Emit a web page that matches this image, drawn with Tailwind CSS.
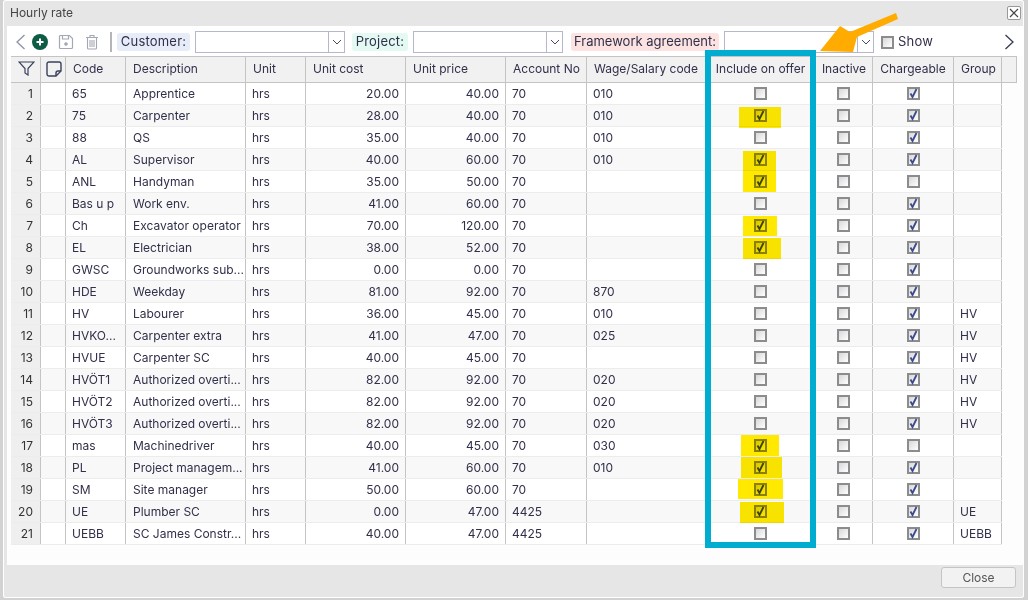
<!DOCTYPE html>
<html lang="en">
<head>
  <meta charset="UTF-8" />
  <title>Hourly rate</title>
  <script src="https://cdn.jsdelivr.net/npm/@tailwindcss/browser@4"></script>
</head>
<body class="bg-[#d2d2d2] font-['Inter',sans-serif] text-[12px] text-[#30304a] overflow-hidden">
  <div class="relative w-[1028px] h-[600px] overflow-hidden">

    <!-- Dialog -->
    <div class="ml-[3px] w-[1021px] h-[598px] bg-[#e6e6e6] rounded-[3px] shadow-[inset_0_0_0_1px_#fff] flex flex-col">
      <div class="h-[26px] flex items-center justify-between pl-[7px] pr-[3px]">
        <span class="text-[12px] text-[#444]">Hourly rate</span>
        <button class="w-[14px] h-[14px] border border-[#999] rounded-[2px] bg-white flex items-center justify-center">
          <svg width="10" height="10" viewBox="0 0 10 10" fill="none" stroke="#444" stroke-width="1.2"><path d="M1 1l8 8M9 1l-8 8"/></svg>
        </button>
      </div>

      <div class="ml-[4px] mr-[1px] h-[539px] bg-[#fdfdfd] flex flex-col">
        <!-- Toolbar -->
        <div class="h-[30px] pt-[2px] flex items-center pl-[8px] pr-[8px] bg-white text-[13px] tracking-[0.2px]">
          <svg width="11" height="18" viewBox="0 0 11 18" fill="none" stroke="#8a93a8" stroke-width="1.3"><path d="M9.5 2L2 9l7.5 7"/></svg>
          <svg class="ml-[6px]" width="16" height="16" viewBox="0 0 16 16"><circle cx="8" cy="8" r="8" fill="#0f5c45"/><path d="M8 4.5v7M4.5 8h7" stroke="#fff" stroke-width="2"/></svg>
          <svg class="ml-[10px]" width="16" height="16" viewBox="0 0 16 16" fill="none" stroke="#a3a8b5" stroke-width="1.2"><path d="M1.5 2.5a1 1 0 0 1 1-1h9l3 3v9a1 1 0 0 1-1 1h-11a1 1 0 0 1-1-1z"/><path d="M4.5 1.5v3.5h6v-3.5"/><circle cx="8" cy="10" r="1.2" fill="#a3a8b5"/></svg>
          <svg class="ml-[11px]" width="14" height="16" viewBox="0 0 14 16" fill="none" stroke="#a3a8b5" stroke-width="1.1"><path d="M1 3.5h12M5 3.5V1.5h4v2M2.5 3.5v10.5a1 1 0 0 0 1 1h7a1 1 0 0 0 1-1V3.5M5 6v7M7 6v7M9 6v7"/></svg>
          <div class="ml-[11px] w-[2px] h-[20px] bg-[#b5b5b5]"></div>
          <span class="ml-[5px] w-[73px] h-[18px] rounded-[3px] bg-[#e6ecf8] flex items-center justify-center">Customer:</span>
          <div class="ml-[5px] w-[150px] h-[22px] border border-[#b4b8cc] flex">
            <div class="flex-1 border-r border-[#b4b8cc]"></div>
            <div class="w-[15px] flex items-center justify-center"><svg width="10" height="6" viewBox="0 0 10 6" fill="none" stroke="#444a66"><path d="M1 1l4 4 4-4"/></svg></div>
          </div>
          <span class="ml-[7px] w-[56px] h-[18px] rounded-[3px] bg-[#e3f9f2] flex items-center justify-center">Project:</span>
          <div class="ml-[5px] w-[150px] h-[22px] border border-[#b4b8cc] flex">
            <div class="flex-1 border-r border-[#b4b8cc]"></div>
            <div class="w-[15px] flex items-center justify-center"><svg width="10" height="6" viewBox="0 0 10 6" fill="none" stroke="#444a66"><path d="M1 1l4 4 4-4"/></svg></div>
          </div>
          <span class="ml-[8px] w-[148px] h-[18px] rounded-[3px] bg-[#fce3e1] flex items-center justify-center whitespace-nowrap tracking-normal">Framework agreement:</span>
          <div class="ml-[5px] w-[150px] h-[22px] border border-[#b4b8cc] flex">
            <div class="flex-1 border-r border-[#b4b8cc]"></div>
            <div class="w-[15px] flex items-center justify-center"><svg width="10" height="6" viewBox="0 0 10 6" fill="none" stroke="#444a66"><path d="M1 1l4 4 4-4"/></svg></div>
          </div>
          <span class="ml-[7px] w-[13px] h-[13px] border-2 border-[#8c8c8c] bg-linear-to-br from-[#d8d8dc] to-white"></span>
          <span class="ml-[4px]">Show</span>
          <svg class="ml-auto" width="11" height="18" viewBox="0 0 11 18" fill="none" stroke="#333a55" stroke-width="1.3"><path d="M1.5 2L9 9l-7.5 7"/></svg>
        </div>

        <!-- Grid -->
        <div id="grid" class="ml-[4px] w-[1006px]"></div>
      </div>

      <!-- Footer -->
      <div class="flex-1 flex justify-end items-center pr-[8px] pb-[8px]">
        <button class="w-[75px] h-[21px] bg-[#f2f2f2] border border-[#c4c4c4] rounded-[3px] text-[#555]">Close</button>
      </div>
    </div>

    <!-- Annotations drawn over the screenshot -->
    <div class="absolute left-[739px] top-[107px] w-[42px] h-[21px] bg-[#ffe900] mix-blend-multiply"></div>
    <div class="absolute left-[743px] top-[151px] w-[33px] h-[21px] bg-[#ffe900] mix-blend-multiply"></div>
    <div class="absolute left-[743px] top-[172px] w-[33px] h-[20px] bg-[#ffe900] mix-blend-multiply"></div>
    <div class="absolute left-[743px] top-[216px] w-[34px] h-[20px] bg-[#ffe900] mix-blend-multiply"></div>
    <div class="absolute left-[743px] top-[238px] w-[38px] h-[21px] bg-[#ffe900] mix-blend-multiply"></div>
    <div class="absolute left-[741px] top-[435px] w-[38px] h-[21px] bg-[#ffe900] mix-blend-multiply"></div>
    <div class="absolute left-[741px] top-[457px] w-[41px] h-[21px] bg-[#ffe900] mix-blend-multiply"></div>
    <div class="absolute left-[738px] top-[479px] w-[45px] h-[20px] bg-[#ffe900] mix-blend-multiply"></div>
    <div class="absolute left-[740px] top-[502px] w-[44px] h-[21px] bg-[#ffe900] mix-blend-multiply"></div>
    <div class="absolute left-[705px] top-[50px] w-[111px] h-[498px] border-[6px] border-[#00acd0]"></div>
    <svg class="absolute left-[815px] top-[10px]" width="90" height="45" viewBox="0 0 90 45"><path d="M5 41 L25 16 L35 22 L81 3 L83 9 L42 27 L38 42 Z" fill="#ffab00"/></svg>
  </div>

  <script>
    const cols = [
      { t: "", w: "w-[30px]" },
      { t: "", w: "w-[25px]" },
      { t: "Code", w: "w-[60px]" },
      { t: "Description", w: "w-[120px]" },
      { t: "Unit", w: "w-[60px]" },
      { t: "Unit cost", w: "w-[100px]" },
      { t: "Unit price", w: "w-[100px]" },
      { t: "Account No", w: "w-[81px]" },
      { t: "Wage/Salary code", w: "w-[119px]" },
      { t: "Include on offer", w: "w-[110px]" },
      { t: "Inactive", w: "w-[57px]" },
      { t: "Chargeable", w: "w-[81px]" },
      { t: "Group", w: "w-[48px]" },
      { t: "", w: "w-[15px]" }
    ];

    // code, description, cost, price, account, wage, offer, chargeable, group
    const rows = [
      ["65", "Apprentice", "20.00", "40.00", "70", "010", 0, 1, ""],
      ["75", "Carpenter", "28.00", "40.00", "70", "010", 1, 1, ""],
      ["88", "QS", "35.00", "40.00", "70", "010", 0, 1, ""],
      ["AL", "Supervisor", "40.00", "60.00", "70", "010", 1, 1, ""],
      ["ANL", "Handyman", "35.00", "50.00", "70", "", 1, 0, ""],
      ["Bas u p", "Work env.", "41.00", "60.00", "70", "", 0, 1, ""],
      ["Ch", "Excavator operator", "70.00", "120.00", "70", "", 1, 1, ""],
      ["EL", "Electrician", "38.00", "52.00", "70", "", 1, 1, ""],
      ["GWSC", "Groundworks sub...", "0.00", "0.00", "70", "", 0, 1, ""],
      ["HDE", "Weekday", "81.00", "92.00", "70", "870", 0, 1, ""],
      ["HV", "Labourer", "36.00", "45.00", "70", "010", 0, 1, "HV"],
      ["HVKO...", "Carpenter extra", "41.00", "47.00", "70", "025", 0, 1, "HV"],
      ["HVUE", "Carpenter SC", "40.00", "45.00", "70", "", 0, 1, "HV"],
      ["HVÖT1", "Authorized overti...", "82.00", "92.00", "70", "020", 0, 1, "HV"],
      ["HVÖT2", "Authorized overti...", "82.00", "92.00", "70", "020", 0, 1, "HV"],
      ["HVÖT3", "Authorized overti...", "82.00", "92.00", "70", "020", 0, 1, "HV"],
      ["mas", "Machinedriver", "40.00", "45.00", "70", "030", 1, 0, ""],
      ["PL", "Project managem...", "41.00", "60.00", "70", "010", 1, 1, ""],
      ["SM", "Site manager", "50.00", "60.00", "70", "", 1, 1, ""],
      ["UE", "Plumber SC", "0.00", "47.00", "4425", "", 1, 1, "UE"],
      ["UEBB", "SC James Constr...", "40.00", "47.00", "4425", "", 0, 1, "UEBB"]
    ];

    const check = (on) => `
      <span class="w-[13px] h-[13px] border-2 border-[#8c8c8c] bg-linear-to-br from-[#d8d8dc] to-white flex items-center justify-center">
        ${on ? `<svg class="shrink-0" width="11" height="11" viewBox="0 0 11 11" fill="none" stroke="#3a4a8c" stroke-width="1.8"><path d="M2.5 5.5l2 3.5L8.5 1"/></svg>` : ""}
      </span>`;

    const filterIcon = `<svg class="ml-[2px]" width="17" height="15" viewBox="0 0 17 15" fill="none" stroke="#39415e" stroke-width="1.2"><path d="M1 1h15l-6 6.5V14l-3-2V7.5z"/></svg>`;
    const noteIcon = `<svg class="ml-[1px]" width="16" height="16" viewBox="0 0 16 16" fill="none" stroke="#39415e" stroke-width="1.4"><path d="M3 1h10a2 2 0 0 1 2 2v7l-5 5H3a2 2 0 0 1-2-2V3a2 2 0 0 1 2-2z"/><path d="M15 10h-3a2 2 0 0 0-2 2v3"/></svg>`;

    const header = cols.map((c, i) => `
      <div class="${c.w} h-full shrink-0 border-r border-[#c4c4c4] flex items-center pb-[2px] ${i < 2 || (i > 8 && i < 12) ? "justify-center" : "pl-[7px]"} whitespace-nowrap">
        ${i === 0 ? filterIcon : i === 1 ? noteIcon : c.t}
      </div>`).join("");

    const body = rows.map((r, i) => `
      <div class="flex w-[991px] h-[22px] border-b border-[#ececec] ${i % 2 ? "bg-[#f8f8f8]" : "bg-white"}">
        <div class="w-[30px] shrink-0 bg-[#efefef] border-r border-[#c4c4c4] flex items-center justify-end pr-[7px] text-[#333]">${i + 1}</div>
        <div class="w-[25px] shrink-0 border-r border-[#c4c4c4]"></div>
        <div class="w-[60px] shrink-0 border-r border-[#c4c4c4] flex items-center pl-[6px] whitespace-nowrap">${r[0]}</div>
        <div class="w-[120px] shrink-0 border-r border-[#c4c4c4] flex items-center pl-[7px] whitespace-nowrap">${r[1]}</div>
        <div class="w-[60px] shrink-0 border-r border-[#c4c4c4] flex items-center pl-[6px]">hrs</div>
        <div class="w-[100px] shrink-0 border-r border-[#c4c4c4] flex items-center justify-end pr-[6px]">${r[2]}</div>
        <div class="w-[100px] shrink-0 border-r border-[#c4c4c4] flex items-center justify-end pr-[6px]">${r[3]}</div>
        <div class="w-[81px] shrink-0 border-r border-[#c4c4c4] flex items-center pl-[6px]">${r[4]}</div>
        <div class="w-[119px] shrink-0 flex items-center pl-[6px]">${r[5]}</div>
        <div class="w-[110px] shrink-0 flex items-center justify-center pr-[1px]">${check(r[6])}</div>
        <div class="w-[57px] shrink-0 border-r border-[#c4c4c4] flex items-center justify-center pr-[1px]">${check(0)}</div>
        <div class="w-[81px] shrink-0 border-r border-[#c4c4c4] flex items-center justify-center">${check(r[7])}</div>
        <div class="w-[48px] shrink-0 border-r border-[#c4c4c4] flex items-center pl-[6px]">${r[8]}</div>
      </div>`).join("");

    document.getElementById("grid").innerHTML = `
      <div class="flex h-[27px] bg-[#f1f1f1] border-y border-[#c4c4c4]">${header}</div>
      ${body}`;
  </script>
</body>
</html>
